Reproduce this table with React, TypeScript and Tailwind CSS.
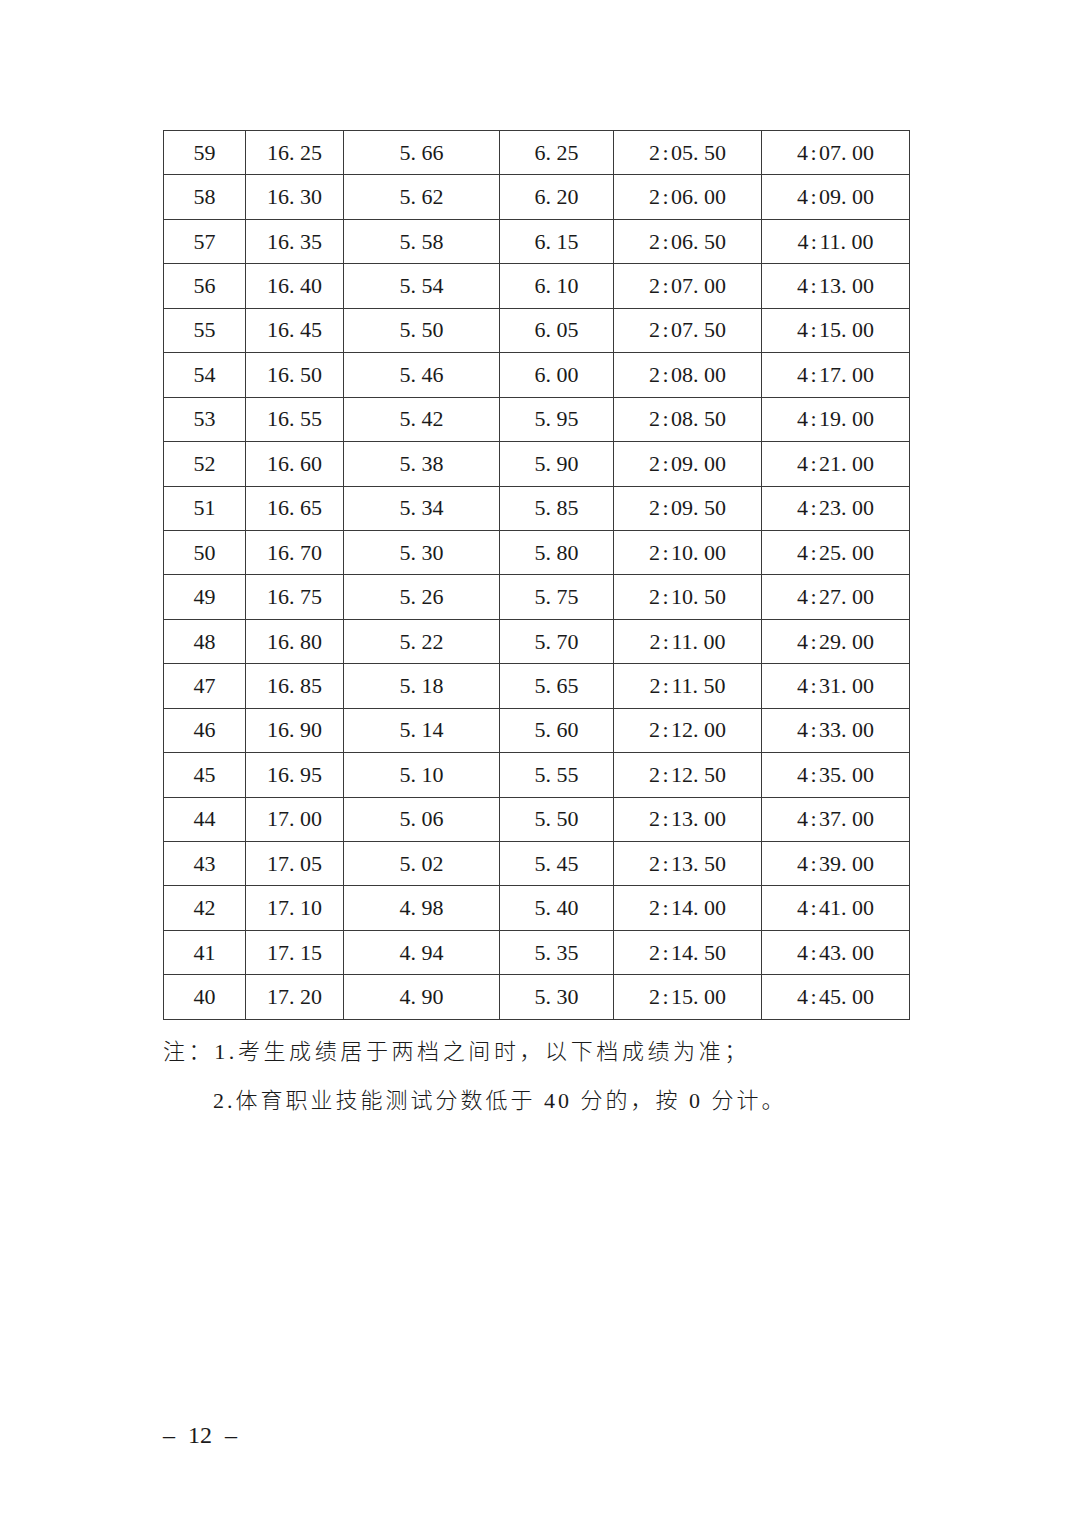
const rows = [
  ['59', '16.25', '5.66', '6.25', '2:05.50', '4:07.00'],
  ['58', '16.30', '5.62', '6.20', '2:06.00', '4:09.00'],
  ['57', '16.35', '5.58', '6.15', '2:06.50', '4:11.00'],
  ['56', '16.40', '5.54', '6.10', '2:07.00', '4:13.00'],
  ['55', '16.45', '5.50', '6.05', '2:07.50', '4:15.00'],
  ['54', '16.50', '5.46', '6.00', '2:08.00', '4:17.00'],
  ['53', '16.55', '5.42', '5.95', '2:08.50', '4:19.00'],
  ['52', '16.60', '5.38', '5.90', '2:09.00', '4:21.00'],
  ['51', '16.65', '5.34', '5.85', '2:09.50', '4:23.00'],
  ['50', '16.70', '5.30', '5.80', '2:10.00', '4:25.00'],
  ['49', '16.75', '5.26', '5.75', '2:10.50', '4:27.00'],
  ['48', '16.80', '5.22', '5.70', '2:11.00', '4:29.00'],
  ['47', '16.85', '5.18', '5.65', '2:11.50', '4:31.00'],
  ['46', '16.90', '5.14', '5.60', '2:12.00', '4:33.00'],
  ['45', '16.95', '5.10', '5.55', '2:12.50', '4:35.00'],
  ['44', '17.00', '5.06', '5.50', '2:13.00', '4:37.00'],
  ['43', '17.05', '5.02', '5.45', '2:13.50', '4:39.00'],
  ['42', '17.10', '4.98', '5.40', '2:14.00', '4:41.00'],
  ['41', '17.15', '4.94', '5.35', '2:14.50', '4:43.00'],
  ['40', '17.20', '4.90', '5.30', '2:15.00', '4:45.00'],
]

// half-width punctuation in the source font is as wide as a digit
function Num({ value }: { value: string }) {
  return (
    <span className="whitespace-nowrap">
      {value.split('').map((ch, i) =>
        ch === '.' ? (
          <span key={i} className="inline-block w-[11px] text-left">.</span>
        ) : ch === ':' ? (
          <span key={i} className="inline-block w-[11px] text-center">:</span>
        ) : (
          <span key={i}>{ch}</span>
        )
      )}
    </span>
  )
}

export default function App() {
  return (
    <div className="w-[1080px] h-[1527px] bg-white text-[#1a1a1a] font-['Liberation_Serif','Noto_Sans_CJK_SC',serif]">
      <div className="pt-[130px] pl-[163px]">
        <div className="grid w-[747px] grid-cols-[82px_98px_156px_114px_148px_148px] border-l border-t border-[#3a3a3a]">
          {rows.map((row, r) =>
            row.map((cell, c) => (
              <div
                key={r + '-' + c}
                className="h-[44.45px] flex items-center justify-center border-r border-b border-[#3a3a3a] text-[22px] leading-none"
              >
                <Num value={cell} />
              </div>
            ))
          )}
        </div>

        <div className="mt-[7px] text-[22px] leading-[49px] tracking-[3.6px] font-light">
          <p>注：1.考生成绩居于两档之间时，以下档成绩为准；</p>
          <p className="pl-[50px] tracking-[3px]">2.体育职业技能测试分数低于 40 分的，按 0 分计。</p>
        </div>

        <div className="mt-[298px] text-[24px] leading-none flex items-center gap-[13px]">
          <span>–</span>
          <span>12</span>
          <span>–</span>
        </div>
      </div>
    </div>
  )
}
